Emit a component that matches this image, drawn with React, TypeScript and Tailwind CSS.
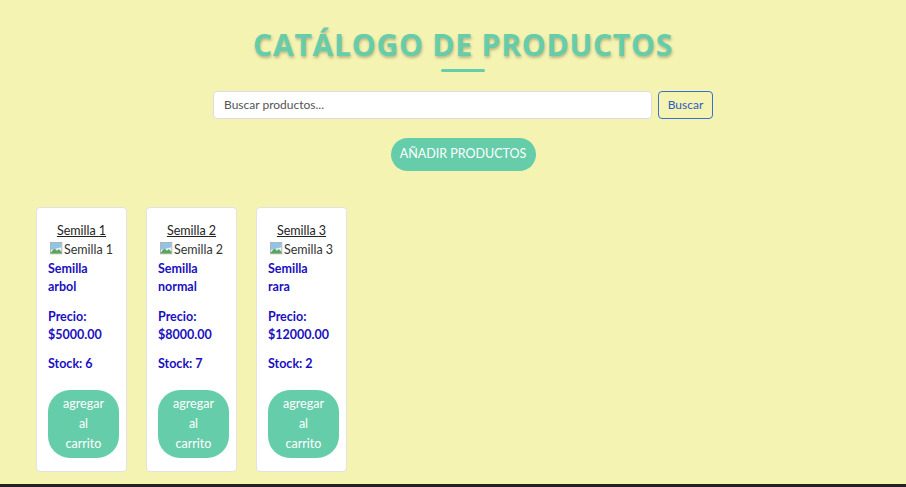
import React from "react";

const products = [
  { id: 1, name: "Semilla arbol", price: "$5000.00", stock: 6 },
  { id: 2, name: "Semilla normal", price: "$8000.00", stock: 7 },
  { id: 3, name: "Semilla rara", price: "$12000.00", stock: 2 },
];

function BrokenImg() {
  return (
    <svg width="14" height="14" viewBox="0 0 16 16" className="inline-block align-[-2px]">
      <rect x="0.5" y="0.5" width="13" height="13" fill="#f4f4f4" stroke="#aaa" />
      <path d="M1 12 L5 7 L8 10 L10 8 L13 11 L13 13 L1 13 Z" fill="#5aa55a" />
      <path d="M1 1 L13 1 L13 6 L1 9 Z" fill="#8fc3e8" />
    </svg>
  );
}

export default function App() {
  return (
    <div className="w-[906px] h-[487px] flex flex-col bg-[#f5f3b1] overflow-hidden" style={{ fontFamily: "Lato, 'Open Sans', sans-serif" }}>
      <div className="flex-1 flex flex-col">
        <div className="flex flex-col items-center pt-[27px] pl-[20px]">
          <h1
            className="text-[30px] font-bold tracking-[0.8px] text-[#66cdaa] leading-[36px]"
            style={{ fontFamily: "'Open Sans', sans-serif", textShadow: "1px 2px 3px rgba(0,0,0,0.25)" }}
          >
            CATÁLOGO DE PRODUCTOS
          </h1>
          <div className="w-[44px] h-[3px] bg-[#66cdaa] mt-[6px] rounded" />
        </div>
        <div className="flex justify-center gap-[6px] mt-[19px] pl-[20px]">
          <div className="w-[439px] h-[28px] bg-white border border-[#ddd] rounded-[4px] flex items-center px-[10px] text-[12px] text-[#555]">
            Buscar productos...
          </div>
          <div className="w-[55px] h-[28px] border border-[#3a6fd0] rounded-[4px] flex items-center justify-center text-[12px] text-[#2c5cc5]">
            Buscar
          </div>
        </div>
        <div className="flex justify-center mt-[19px] pl-[20px]">
          <div className="w-[145px] h-[33px] rounded-full bg-[#66cdaa] flex items-center justify-center text-[12.5px] text-white">
            AÑADIR PRODUCTOS
          </div>
        </div>
        <div className="flex gap-[19px] pl-[36px] mt-[36px]">
          {products.map((p) => (
            <div key={p.id} className="w-[91px] h-[265px] bg-white border border-[#e2e2e2] rounded-[4px] px-[11px] pt-[15px] flex flex-col">
              <div className="text-center text-[12.5px] text-[#222] underline leading-[16px]">Semilla {p.id}</div>
              <div className="text-center text-[12.5px] text-[#333] leading-[18px] mt-[2px] whitespace-nowrap -mx-[6px]">
                <BrokenImg />Semilla {p.id}
              </div>
              <div className="w-[62px] text-[12.5px] font-bold text-[#1a10c0] leading-[18px] mt-[1px]">{p.name}</div>
              <div className="w-[62px] text-[12.5px] font-bold text-[#1a10c0] leading-[18px] mt-[12px]">Precio: {p.price}</div>
              <div className="w-[62px] text-[12.5px] font-bold text-[#1a10c0] leading-[18px] mt-[11px]">Stock: {p.stock}</div>
              <div className="mt-[17px] w-[71px] h-[68px] rounded-[22px] bg-[#66cdaa] flex items-center justify-center text-center text-white text-[12.5px] leading-[20px] px-[12px]">
                agregar al carrito
              </div>
            </div>
          ))}
        </div>
      </div>
      <div className="h-[3px] bg-[#222]" />
    </div>
  );
}
